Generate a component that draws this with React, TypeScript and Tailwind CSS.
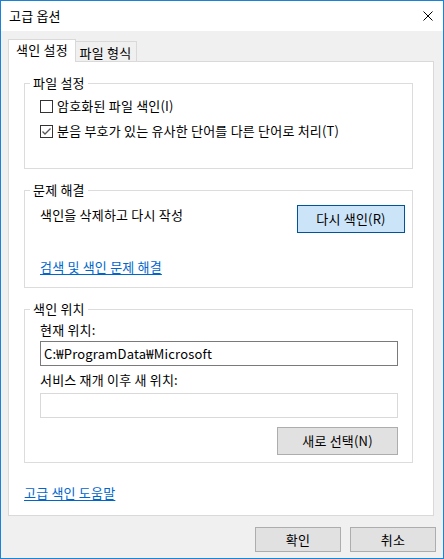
const FONT = "font-['Noto_Sans_CJK_KR','Noto_Sans',sans-serif]";

const Checkbox = ({ checked }: { checked?: boolean }) => (
  <span className="w-[13px] h-[13px] border border-[#333333] bg-white flex items-center justify-center shrink-0">
    {checked && (
      <svg width="11" height="11" viewBox="0 0 11 11">
        <polyline points="1.5,5.5 4,8 9.5,2.5" fill="none" stroke="#555555" strokeWidth="1.3" />
      </svg>
    )}
  </span>
);

const Group = ({ title, className, children }: { title: string; className?: string; children: React.ReactNode }) => (
  <fieldset className={`border border-[#dcdcdc] pl-[15px] ${className ?? ""}`}>
    {/* legend is offset by the fieldset padding, so pull it back */}
    <legend className="-ml-[10px] px-[3px] leading-[16px]">{title}</legend>
    {children}
  </fieldset>
);

export default function App() {
  return (
    <div className={`w-[444px] h-[559px] border border-[#1883d7] bg-[#f0f0f0] flex flex-col text-[13px] leading-[16px] tracking-[0.2px] text-black ${FONT}`}>
      {/* title bar */}
      <div className="h-[30px] bg-white flex items-center justify-between pl-[8px] pr-[10px]">
        <span>고급 옵션</span>
        <svg width="10" height="10" viewBox="0 0 10 10">
          <path d="M0.5 0.5 L9.5 9.5 M9.5 0.5 L0.5 9.5" stroke="#000" strokeWidth="1" />
        </svg>
      </div>

      <div className="pl-[7px] pt-[8px]">
        {/* tabs */}
        <div className="flex items-end h-[22px]">
          <div className="relative z-10 h-[23px] -mb-px w-[68px] bg-white border-t border-l border-r border-[#d9d9d9] flex items-start justify-center pt-[2px]">
            색인 설정
          </div>
          <div className="h-[20px] w-[62px] -ml-px bg-[#f0f0f0] border-t border-r border-[#d9d9d9] flex items-start justify-center pt-[3px]">
            파일 형식
          </div>
        </div>

        {/* panel */}
        <div className="w-[426px] h-[455px] bg-white border border-[#d9d9d9] pl-[15px] pt-[13px] flex flex-col">
          <Group title="파일 설정" className="w-[389px] pt-[7px] pb-[29px]">
            <div className="flex items-center gap-[4px] h-[16px]">
              <Checkbox />
              <span>암호화된 파일 색인(I)</span>
            </div>
            <div className="flex items-center gap-[4px] h-[16px] mt-[9px]">
              <Checkbox checked />
              <span>분음 부호가 있는 유사한 단어를 다른 단어로 처리(T)</span>
            </div>
          </Group>

          <Group title="문제 해결" className="w-[389px] mt-[13px] pr-[7px] pt-[7px] pb-[12px]">
            <div className="flex items-start justify-between">
              <span className="mt-[2px]">색인을 삭제하고 다시 작성</span>
              <button className="w-[108px] h-[28px] bg-[#cce4f7] border border-[#005499] leading-[16px]">
                다시 색인(R)
              </button>
            </div>
            <a className="block w-fit mt-[26px] text-[#0066cc] underline underline-offset-[2px]">
              검색 및 색인 문제 해결
            </a>
          </Group>

          <Group title="색인 위치" className="w-[389px] mt-[13px] pr-[14px] pt-[5px] pb-[7px]">
            <div>현재 위치:</div>
            <div className="mt-[3px] h-[25px] border border-[#7a7a7a] flex items-center pl-[3px]">
              C:₩ProgramData₩Microsoft
            </div>
            <div className="mt-[6px]">서비스 재개 이후 새 위치:</div>
            <div className="mt-[5px] h-[25px] border border-[#d9d9d9]" />
            <div className="flex justify-end mt-[9px]">
              <button className="w-[121px] h-[28px] bg-[#e1e1e1] border border-[#adadad] leading-[16px]">
                새로 선택(N)
              </button>
            </div>
          </Group>

          <a className="block w-fit mt-[22px] text-[#0066cc] underline underline-offset-[2px]">
            고급 색인 도움말
          </a>
        </div>

        {/* footer buttons */}
        <div className="w-[428px] flex justify-end gap-[9px] mt-[11px]">
          <button className="w-[86px] h-[25px] bg-[#e1e1e1] border border-[#adadad] leading-[16px]">확인</button>
          <button className="w-[86px] h-[25px] bg-[#e1e1e1] border border-[#adadad] leading-[16px]">취소</button>
        </div>
      </div>
    </div>
  );
}
